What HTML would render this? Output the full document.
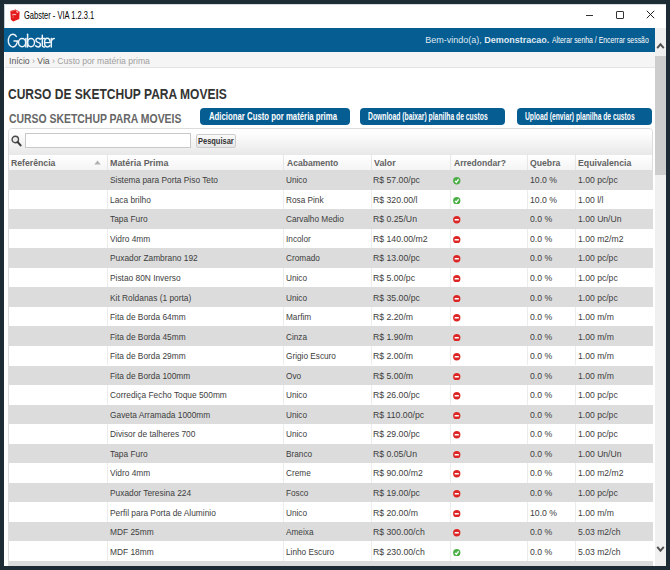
<!DOCTYPE html>
<html><head><meta charset="utf-8"><style>
html,body{margin:0;padding:0;}
body{width:670px;height:570px;overflow:hidden;background:#fff;position:relative;font-family:"Liberation Sans",sans-serif;}
.abs{position:absolute;}
.tx{position:absolute;white-space:nowrap;transform-origin:0 0;}
.btn{position:absolute;top:107.5px;height:17.5px;background:#065d92;border-radius:4px;}
</style></head><body>
<!-- title bar -->
<div class="abs" style="left:4px;top:4px;width:662px;height:24px;background:#fff;"></div>
<svg class="abs" style="left:10px;top:8.5px" width="10" height="13" viewBox="0 0 10 13"><path d="M0.3 2 L5.5 0.5 L9.6 2.8 L9.3 10 L3.2 12.5 L0.9 10.8 Z" fill="#e31b1b"/><path d="M6.3 2.4 L8.2 3.4" stroke="#fbd0d0" stroke-width="1.2"/><path d="M2.2 6.2 Q4 4.6 6.2 5.9" stroke="#f6b4b4" stroke-width="1.1" fill="none"/><path d="M2.6 8.3 L3.6 8" stroke="#f3a0a0" stroke-width="1"/><path d="M1 2.3 L5.5 1.2 L8.5 2.8" stroke="#f06a6a" stroke-width="0.8" fill="none"/></svg>
<div class="abs" style="left:586px;top:15px;width:7px;height:1px;background:#333;"></div>
<div class="abs" style="left:616px;top:11px;width:6px;height:6px;border:1px solid #333;border-radius:1px;"></div>
<svg class="abs" style="left:646px;top:10px" width="9" height="9" viewBox="0 0 9 9"><path d="M0.8 0.8 L8.2 8.2 M8.2 0.8 L0.8 8.2" stroke="#222" stroke-width="1"/></svg>
<!-- blue header -->
<div class="abs" style="left:4px;top:28px;width:651px;height:24px;background:#065d92;"></div>
<svg class="abs" style="left:4px;top:28px" width="60" height="24" viewBox="0 0 60 24"><g fill="none" stroke="#eef4fa" stroke-width="1.45" stroke-linecap="round">
<path d="M12.3 8.4 A4.6 6.3 0 1 0 13.3 14.2 L13.3 13 L10 13"/>
<ellipse cx="18.1" cy="14.6" rx="3.6" ry="4.2"/><path d="M21.9 10.4 L21.9 19"/>
<path d="M23.6 6.2 L23.6 19"/><ellipse cx="27" cy="14.6" rx="3.5" ry="4.2"/>
<path d="M36.2 11.3 Q35.3 10.3 34 10.3 Q31.9 10.3 31.9 12.3 Q31.9 13.9 34 14.4 Q36.4 14.9 36.4 16.7 Q36.4 18.9 34 18.9 Q32.5 18.9 31.6 17.8"/>
<path d="M38.3 7.2 L38.3 17.5 Q38.3 18.9 39.8 18.9 L40.6 18.9 M36.9 10.5 L40.8 10.5"/>
<path d="M40.6 14.6 L46.1 14.6 Q46.1 10.3 43.3 10.3 Q40.5 10.3 40.5 14.6 Q40.5 18.9 43.3 18.9 Q45.2 18.9 46 17.4"/>
<path d="M47.3 10.4 L47.3 19 M47.3 13.5 Q47.8 10.4 50.3 10.4"/>
</g></svg>
<!-- scrollbar -->
<div class="abs" style="left:655px;top:28px;width:11px;height:538px;background:#f0f0f0;"></div>
<div class="abs" style="left:655px;top:56px;width:11px;height:119px;background:#cdcdcd;"></div>
<svg class="abs" style="left:656px;top:42px" width="9" height="8" viewBox="0 0 9 8"><path d="M1.2 6.2 L4.5 2.3 L7.8 6.2" stroke="#505050" stroke-width="1.9" fill="none"/></svg>
<svg class="abs" style="left:656px;top:544.5px" width="9" height="8" viewBox="0 0 9 8"><path d="M1.2 1.8 L4.5 5.7 L7.8 1.8" stroke="#505050" stroke-width="1.9" fill="none"/></svg>
<!-- breadcrumb -->
<div class="abs" style="left:5px;top:52px;width:650px;height:15px;background:#f5f5f5;border-bottom:1px solid #e3e3e3;"></div>
<!-- buttons -->
<div class="btn" style="left:199.5px;width:150px;"></div>
<div class="btn" style="left:360px;width:145px;"></div>
<div class="btn" style="left:517.2px;width:134.6px;"></div>
<!-- table container -->
<div class="abs" style="left:8px;top:128px;width:643px;height:460px;border:1px solid #dcdcdc;border-radius:4px;background:#fff;"></div>
<div class="abs" style="left:9px;top:129px;width:643px;height:26px;background:linear-gradient(#fefefe 15%,#e8e8e8);border-radius:4px 4px 0 0;"></div>
<svg class="abs" style="left:11px;top:134.5px" width="11" height="12" viewBox="0 0 11 12"><circle cx="4.3" cy="4.5" r="3.2" stroke="#4a4a4a" stroke-width="1.4" fill="#ececec"/><path d="M6.6 7 L9.6 10.4" stroke="#3a3a3a" stroke-width="2" stroke-linecap="round"/></svg>
<div class="abs" style="left:25px;top:133px;width:164px;height:13px;border:1px solid #c9c9c9;background:#fff;"></div>
<div class="abs" style="left:196px;top:134px;width:38px;height:12px;border:1px solid #cdcdcd;border-radius:2px;background:linear-gradient(#fafafa,#e6e6e6);"></div>
<!-- header row -->
<div class="abs" style="left:9px;top:155px;width:643px;height:15px;background:linear-gradient(#ffffff,#f4f4f4);"></div>
<div class="abs" style="left:107px;top:155px;width:1px;height:15px;background:#e6e6e6"></div>
<div class="abs" style="left:283px;top:155px;width:1px;height:15px;background:#e6e6e6"></div>
<div class="abs" style="left:371px;top:155px;width:1px;height:15px;background:#e6e6e6"></div>
<div class="abs" style="left:450px;top:155px;width:1px;height:15px;background:#e6e6e6"></div>
<div class="abs" style="left:527px;top:155px;width:1px;height:15px;background:#e6e6e6"></div>
<div class="abs" style="left:575px;top:155px;width:1px;height:15px;background:#e6e6e6"></div>
<svg class="abs" style="left:94px;top:160px" width="7" height="5" viewBox="0 0 7 5"><path d="M0.3 4.5 L3.5 0.5 L6.7 4.5 Z" fill="#b0b0b0"/></svg>
<div class="abs" style="left:9px;top:170.00px;width:644px;height:20.05px;background:#dcdcdc"></div>
<div class="abs" style="left:9px;top:189.55px;width:644px;height:20.05px;background:#ffffff"></div>
<div class="abs" style="left:107px;top:189.55px;width:1px;height:19.55px;background:#ececec"></div>
<div class="abs" style="left:283px;top:189.55px;width:1px;height:19.55px;background:#ececec"></div>
<div class="abs" style="left:371px;top:189.55px;width:1px;height:19.55px;background:#ececec"></div>
<div class="abs" style="left:450px;top:189.55px;width:1px;height:19.55px;background:#ececec"></div>
<div class="abs" style="left:527px;top:189.55px;width:1px;height:19.55px;background:#ececec"></div>
<div class="abs" style="left:575px;top:189.55px;width:1px;height:19.55px;background:#ececec"></div>
<div class="abs" style="left:9px;top:209.10px;width:644px;height:20.05px;background:#dcdcdc"></div>
<div class="abs" style="left:9px;top:228.65px;width:644px;height:20.05px;background:#ffffff"></div>
<div class="abs" style="left:107px;top:228.65px;width:1px;height:19.55px;background:#ececec"></div>
<div class="abs" style="left:283px;top:228.65px;width:1px;height:19.55px;background:#ececec"></div>
<div class="abs" style="left:371px;top:228.65px;width:1px;height:19.55px;background:#ececec"></div>
<div class="abs" style="left:450px;top:228.65px;width:1px;height:19.55px;background:#ececec"></div>
<div class="abs" style="left:527px;top:228.65px;width:1px;height:19.55px;background:#ececec"></div>
<div class="abs" style="left:575px;top:228.65px;width:1px;height:19.55px;background:#ececec"></div>
<div class="abs" style="left:9px;top:248.20px;width:644px;height:20.05px;background:#dcdcdc"></div>
<div class="abs" style="left:9px;top:267.75px;width:644px;height:20.05px;background:#ffffff"></div>
<div class="abs" style="left:107px;top:267.75px;width:1px;height:19.55px;background:#ececec"></div>
<div class="abs" style="left:283px;top:267.75px;width:1px;height:19.55px;background:#ececec"></div>
<div class="abs" style="left:371px;top:267.75px;width:1px;height:19.55px;background:#ececec"></div>
<div class="abs" style="left:450px;top:267.75px;width:1px;height:19.55px;background:#ececec"></div>
<div class="abs" style="left:527px;top:267.75px;width:1px;height:19.55px;background:#ececec"></div>
<div class="abs" style="left:575px;top:267.75px;width:1px;height:19.55px;background:#ececec"></div>
<div class="abs" style="left:9px;top:287.30px;width:644px;height:20.05px;background:#dcdcdc"></div>
<div class="abs" style="left:9px;top:306.85px;width:644px;height:20.05px;background:#ffffff"></div>
<div class="abs" style="left:107px;top:306.85px;width:1px;height:19.55px;background:#ececec"></div>
<div class="abs" style="left:283px;top:306.85px;width:1px;height:19.55px;background:#ececec"></div>
<div class="abs" style="left:371px;top:306.85px;width:1px;height:19.55px;background:#ececec"></div>
<div class="abs" style="left:450px;top:306.85px;width:1px;height:19.55px;background:#ececec"></div>
<div class="abs" style="left:527px;top:306.85px;width:1px;height:19.55px;background:#ececec"></div>
<div class="abs" style="left:575px;top:306.85px;width:1px;height:19.55px;background:#ececec"></div>
<div class="abs" style="left:9px;top:326.40px;width:644px;height:20.05px;background:#dcdcdc"></div>
<div class="abs" style="left:9px;top:345.95px;width:644px;height:20.05px;background:#ffffff"></div>
<div class="abs" style="left:107px;top:345.95px;width:1px;height:19.55px;background:#ececec"></div>
<div class="abs" style="left:283px;top:345.95px;width:1px;height:19.55px;background:#ececec"></div>
<div class="abs" style="left:371px;top:345.95px;width:1px;height:19.55px;background:#ececec"></div>
<div class="abs" style="left:450px;top:345.95px;width:1px;height:19.55px;background:#ececec"></div>
<div class="abs" style="left:527px;top:345.95px;width:1px;height:19.55px;background:#ececec"></div>
<div class="abs" style="left:575px;top:345.95px;width:1px;height:19.55px;background:#ececec"></div>
<div class="abs" style="left:9px;top:365.50px;width:644px;height:20.05px;background:#dcdcdc"></div>
<div class="abs" style="left:9px;top:385.05px;width:644px;height:20.05px;background:#ffffff"></div>
<div class="abs" style="left:107px;top:385.05px;width:1px;height:19.55px;background:#ececec"></div>
<div class="abs" style="left:283px;top:385.05px;width:1px;height:19.55px;background:#ececec"></div>
<div class="abs" style="left:371px;top:385.05px;width:1px;height:19.55px;background:#ececec"></div>
<div class="abs" style="left:450px;top:385.05px;width:1px;height:19.55px;background:#ececec"></div>
<div class="abs" style="left:527px;top:385.05px;width:1px;height:19.55px;background:#ececec"></div>
<div class="abs" style="left:575px;top:385.05px;width:1px;height:19.55px;background:#ececec"></div>
<div class="abs" style="left:9px;top:404.60px;width:644px;height:20.05px;background:#dcdcdc"></div>
<div class="abs" style="left:9px;top:424.15px;width:644px;height:20.05px;background:#ffffff"></div>
<div class="abs" style="left:107px;top:424.15px;width:1px;height:19.55px;background:#ececec"></div>
<div class="abs" style="left:283px;top:424.15px;width:1px;height:19.55px;background:#ececec"></div>
<div class="abs" style="left:371px;top:424.15px;width:1px;height:19.55px;background:#ececec"></div>
<div class="abs" style="left:450px;top:424.15px;width:1px;height:19.55px;background:#ececec"></div>
<div class="abs" style="left:527px;top:424.15px;width:1px;height:19.55px;background:#ececec"></div>
<div class="abs" style="left:575px;top:424.15px;width:1px;height:19.55px;background:#ececec"></div>
<div class="abs" style="left:9px;top:443.70px;width:644px;height:20.05px;background:#dcdcdc"></div>
<div class="abs" style="left:9px;top:463.25px;width:644px;height:20.05px;background:#ffffff"></div>
<div class="abs" style="left:107px;top:463.25px;width:1px;height:19.55px;background:#ececec"></div>
<div class="abs" style="left:283px;top:463.25px;width:1px;height:19.55px;background:#ececec"></div>
<div class="abs" style="left:371px;top:463.25px;width:1px;height:19.55px;background:#ececec"></div>
<div class="abs" style="left:450px;top:463.25px;width:1px;height:19.55px;background:#ececec"></div>
<div class="abs" style="left:527px;top:463.25px;width:1px;height:19.55px;background:#ececec"></div>
<div class="abs" style="left:575px;top:463.25px;width:1px;height:19.55px;background:#ececec"></div>
<div class="abs" style="left:9px;top:482.80px;width:644px;height:20.05px;background:#dcdcdc"></div>
<div class="abs" style="left:9px;top:502.35px;width:644px;height:20.05px;background:#ffffff"></div>
<div class="abs" style="left:107px;top:502.35px;width:1px;height:19.55px;background:#ececec"></div>
<div class="abs" style="left:283px;top:502.35px;width:1px;height:19.55px;background:#ececec"></div>
<div class="abs" style="left:371px;top:502.35px;width:1px;height:19.55px;background:#ececec"></div>
<div class="abs" style="left:450px;top:502.35px;width:1px;height:19.55px;background:#ececec"></div>
<div class="abs" style="left:527px;top:502.35px;width:1px;height:19.55px;background:#ececec"></div>
<div class="abs" style="left:575px;top:502.35px;width:1px;height:19.55px;background:#ececec"></div>
<div class="abs" style="left:9px;top:521.90px;width:644px;height:20.05px;background:#dcdcdc"></div>
<div class="abs" style="left:9px;top:541.45px;width:644px;height:20.05px;background:#ffffff"></div>
<div class="abs" style="left:107px;top:541.45px;width:1px;height:19.55px;background:#ececec"></div>
<div class="abs" style="left:283px;top:541.45px;width:1px;height:19.55px;background:#ececec"></div>
<div class="abs" style="left:371px;top:541.45px;width:1px;height:19.55px;background:#ececec"></div>
<div class="abs" style="left:450px;top:541.45px;width:1px;height:19.55px;background:#ececec"></div>
<div class="abs" style="left:527px;top:541.45px;width:1px;height:19.55px;background:#ececec"></div>
<div class="abs" style="left:575px;top:541.45px;width:1px;height:19.55px;background:#ececec"></div>
<div class="abs" style="left:9px;top:561.00px;width:644px;height:20.05px;background:#dcdcdc"></div>
<div class="abs" style="left:453.3px;top:177.20px;line-height:0"><svg width="7.5" height="7.5" viewBox="0 0 8 8"><circle cx="4" cy="4" r="3.9" fill="#4cae46"/><path d="M2.1 4.2 L3.5 5.6 L6 2.4" stroke="#fff" stroke-width="1.3" fill="none"/></svg></div>
<div class="abs" style="left:453.3px;top:196.75px;line-height:0"><svg width="7.5" height="7.5" viewBox="0 0 8 8"><circle cx="4" cy="4" r="3.9" fill="#4cae46"/><path d="M2.1 4.2 L3.5 5.6 L6 2.4" stroke="#fff" stroke-width="1.3" fill="none"/></svg></div>
<div class="abs" style="left:453.3px;top:216.30px;line-height:0"><svg width="7.5" height="7.5" viewBox="0 0 8 8"><circle cx="4" cy="4" r="3.9" fill="#de2525"/><rect x="1.8" y="3.2" width="4.4" height="1.6" fill="#fff"/></svg></div>
<div class="abs" style="left:453.3px;top:235.85px;line-height:0"><svg width="7.5" height="7.5" viewBox="0 0 8 8"><circle cx="4" cy="4" r="3.9" fill="#de2525"/><rect x="1.8" y="3.2" width="4.4" height="1.6" fill="#fff"/></svg></div>
<div class="abs" style="left:453.3px;top:255.40px;line-height:0"><svg width="7.5" height="7.5" viewBox="0 0 8 8"><circle cx="4" cy="4" r="3.9" fill="#de2525"/><rect x="1.8" y="3.2" width="4.4" height="1.6" fill="#fff"/></svg></div>
<div class="abs" style="left:453.3px;top:274.95px;line-height:0"><svg width="7.5" height="7.5" viewBox="0 0 8 8"><circle cx="4" cy="4" r="3.9" fill="#de2525"/><rect x="1.8" y="3.2" width="4.4" height="1.6" fill="#fff"/></svg></div>
<div class="abs" style="left:453.3px;top:294.50px;line-height:0"><svg width="7.5" height="7.5" viewBox="0 0 8 8"><circle cx="4" cy="4" r="3.9" fill="#de2525"/><rect x="1.8" y="3.2" width="4.4" height="1.6" fill="#fff"/></svg></div>
<div class="abs" style="left:453.3px;top:314.05px;line-height:0"><svg width="7.5" height="7.5" viewBox="0 0 8 8"><circle cx="4" cy="4" r="3.9" fill="#de2525"/><rect x="1.8" y="3.2" width="4.4" height="1.6" fill="#fff"/></svg></div>
<div class="abs" style="left:453.3px;top:333.60px;line-height:0"><svg width="7.5" height="7.5" viewBox="0 0 8 8"><circle cx="4" cy="4" r="3.9" fill="#de2525"/><rect x="1.8" y="3.2" width="4.4" height="1.6" fill="#fff"/></svg></div>
<div class="abs" style="left:453.3px;top:353.15px;line-height:0"><svg width="7.5" height="7.5" viewBox="0 0 8 8"><circle cx="4" cy="4" r="3.9" fill="#de2525"/><rect x="1.8" y="3.2" width="4.4" height="1.6" fill="#fff"/></svg></div>
<div class="abs" style="left:453.3px;top:372.70px;line-height:0"><svg width="7.5" height="7.5" viewBox="0 0 8 8"><circle cx="4" cy="4" r="3.9" fill="#de2525"/><rect x="1.8" y="3.2" width="4.4" height="1.6" fill="#fff"/></svg></div>
<div class="abs" style="left:453.3px;top:392.25px;line-height:0"><svg width="7.5" height="7.5" viewBox="0 0 8 8"><circle cx="4" cy="4" r="3.9" fill="#de2525"/><rect x="1.8" y="3.2" width="4.4" height="1.6" fill="#fff"/></svg></div>
<div class="abs" style="left:453.3px;top:411.80px;line-height:0"><svg width="7.5" height="7.5" viewBox="0 0 8 8"><circle cx="4" cy="4" r="3.9" fill="#de2525"/><rect x="1.8" y="3.2" width="4.4" height="1.6" fill="#fff"/></svg></div>
<div class="abs" style="left:453.3px;top:431.35px;line-height:0"><svg width="7.5" height="7.5" viewBox="0 0 8 8"><circle cx="4" cy="4" r="3.9" fill="#de2525"/><rect x="1.8" y="3.2" width="4.4" height="1.6" fill="#fff"/></svg></div>
<div class="abs" style="left:453.3px;top:450.90px;line-height:0"><svg width="7.5" height="7.5" viewBox="0 0 8 8"><circle cx="4" cy="4" r="3.9" fill="#de2525"/><rect x="1.8" y="3.2" width="4.4" height="1.6" fill="#fff"/></svg></div>
<div class="abs" style="left:453.3px;top:470.45px;line-height:0"><svg width="7.5" height="7.5" viewBox="0 0 8 8"><circle cx="4" cy="4" r="3.9" fill="#de2525"/><rect x="1.8" y="3.2" width="4.4" height="1.6" fill="#fff"/></svg></div>
<div class="abs" style="left:453.3px;top:490.00px;line-height:0"><svg width="7.5" height="7.5" viewBox="0 0 8 8"><circle cx="4" cy="4" r="3.9" fill="#de2525"/><rect x="1.8" y="3.2" width="4.4" height="1.6" fill="#fff"/></svg></div>
<div class="abs" style="left:453.3px;top:509.55px;line-height:0"><svg width="7.5" height="7.5" viewBox="0 0 8 8"><circle cx="4" cy="4" r="3.9" fill="#de2525"/><rect x="1.8" y="3.2" width="4.4" height="1.6" fill="#fff"/></svg></div>
<div class="abs" style="left:453.3px;top:529.10px;line-height:0"><svg width="7.5" height="7.5" viewBox="0 0 8 8"><circle cx="4" cy="4" r="3.9" fill="#de2525"/><rect x="1.8" y="3.2" width="4.4" height="1.6" fill="#fff"/></svg></div>
<div class="abs" style="left:453.3px;top:548.65px;line-height:0"><svg width="7.5" height="7.5" viewBox="0 0 8 8"><circle cx="4" cy="4" r="3.9" fill="#4cae46"/><path d="M2.1 4.2 L3.5 5.6 L6 2.4" stroke="#fff" stroke-width="1.3" fill="none"/></svg></div>
<div class="tx" style="left:109.90px;top:174.20px;font-size:9.3px;font-weight:400;line-height:12px;color:#3d3d3d;transform:scaleX(0.8980);">Sistema para Porta Piso Teto</div>
<div class="tx" style="left:285.90px;top:174.20px;font-size:9.3px;font-weight:400;line-height:12px;color:#3d3d3d;transform:scaleX(0.8870);">Unico</div>
<div class="tx" style="left:372.80px;top:174.20px;font-size:9.3px;font-weight:400;line-height:12px;color:#3d3d3d;transform:scaleX(0.9350);">R$ 57.00/pc</div>
<div class="tx" style="left:530.00px;top:174.20px;font-size:9.3px;font-weight:400;line-height:12px;color:#3d3d3d;transform:scaleX(0.9350);">10.0 %</div>
<div class="tx" style="left:578.30px;top:174.20px;font-size:9.3px;font-weight:400;line-height:12px;color:#3d3d3d;transform:scaleX(0.9250);">1.00 pc/pc</div>
<div class="tx" style="left:109.90px;top:193.75px;font-size:9.3px;font-weight:400;line-height:12px;color:#3d3d3d;transform:scaleX(0.8980);">Laca brilho</div>
<div class="tx" style="left:285.90px;top:193.75px;font-size:9.3px;font-weight:400;line-height:12px;color:#3d3d3d;transform:scaleX(0.8870);">Rosa Pink</div>
<div class="tx" style="left:372.80px;top:193.75px;font-size:9.3px;font-weight:400;line-height:12px;color:#3d3d3d;transform:scaleX(0.9350);">R$ 320.00/l</div>
<div class="tx" style="left:530.00px;top:193.75px;font-size:9.3px;font-weight:400;line-height:12px;color:#3d3d3d;transform:scaleX(0.9350);">10.0 %</div>
<div class="tx" style="left:578.30px;top:193.75px;font-size:9.3px;font-weight:400;line-height:12px;color:#3d3d3d;transform:scaleX(0.9250);">1.00 l/l</div>
<div class="tx" style="left:109.90px;top:213.30px;font-size:9.3px;font-weight:400;line-height:12px;color:#3d3d3d;transform:scaleX(0.8980);">Tapa Furo</div>
<div class="tx" style="left:285.90px;top:213.30px;font-size:9.3px;font-weight:400;line-height:12px;color:#3d3d3d;transform:scaleX(0.8870);">Carvalho Medio</div>
<div class="tx" style="left:372.80px;top:213.30px;font-size:9.3px;font-weight:400;line-height:12px;color:#3d3d3d;transform:scaleX(0.9350);">R$ 0.25/Un</div>
<div class="tx" style="left:530.00px;top:213.30px;font-size:9.3px;font-weight:400;line-height:12px;color:#3d3d3d;transform:scaleX(0.9350);">0.0 %</div>
<div class="tx" style="left:578.30px;top:213.30px;font-size:9.3px;font-weight:400;line-height:12px;color:#3d3d3d;transform:scaleX(0.9250);">1.00 Un/Un</div>
<div class="tx" style="left:109.90px;top:232.85px;font-size:9.3px;font-weight:400;line-height:12px;color:#3d3d3d;transform:scaleX(0.8980);">Vidro 4mm</div>
<div class="tx" style="left:285.90px;top:232.85px;font-size:9.3px;font-weight:400;line-height:12px;color:#3d3d3d;transform:scaleX(0.8870);">Incolor</div>
<div class="tx" style="left:372.80px;top:232.85px;font-size:9.3px;font-weight:400;line-height:12px;color:#3d3d3d;transform:scaleX(0.9350);">R$ 140.00/m2</div>
<div class="tx" style="left:530.00px;top:232.85px;font-size:9.3px;font-weight:400;line-height:12px;color:#3d3d3d;transform:scaleX(0.9350);">0.0 %</div>
<div class="tx" style="left:578.30px;top:232.85px;font-size:9.3px;font-weight:400;line-height:12px;color:#3d3d3d;transform:scaleX(0.9250);">1.00 m2/m2</div>
<div class="tx" style="left:109.90px;top:252.40px;font-size:9.3px;font-weight:400;line-height:12px;color:#3d3d3d;transform:scaleX(0.8980);">Puxador Zambrano 192</div>
<div class="tx" style="left:285.90px;top:252.40px;font-size:9.3px;font-weight:400;line-height:12px;color:#3d3d3d;transform:scaleX(0.8870);">Cromado</div>
<div class="tx" style="left:372.80px;top:252.40px;font-size:9.3px;font-weight:400;line-height:12px;color:#3d3d3d;transform:scaleX(0.9350);">R$ 13.00/pc</div>
<div class="tx" style="left:530.00px;top:252.40px;font-size:9.3px;font-weight:400;line-height:12px;color:#3d3d3d;transform:scaleX(0.9350);">0.0 %</div>
<div class="tx" style="left:578.30px;top:252.40px;font-size:9.3px;font-weight:400;line-height:12px;color:#3d3d3d;transform:scaleX(0.9250);">1.00 pc/pc</div>
<div class="tx" style="left:109.90px;top:271.95px;font-size:9.3px;font-weight:400;line-height:12px;color:#3d3d3d;transform:scaleX(0.8980);">Pistao 80N Inverso</div>
<div class="tx" style="left:285.90px;top:271.95px;font-size:9.3px;font-weight:400;line-height:12px;color:#3d3d3d;transform:scaleX(0.8870);">Unico</div>
<div class="tx" style="left:372.80px;top:271.95px;font-size:9.3px;font-weight:400;line-height:12px;color:#3d3d3d;transform:scaleX(0.9350);">R$ 5.00/pc</div>
<div class="tx" style="left:530.00px;top:271.95px;font-size:9.3px;font-weight:400;line-height:12px;color:#3d3d3d;transform:scaleX(0.9350);">0.0 %</div>
<div class="tx" style="left:578.30px;top:271.95px;font-size:9.3px;font-weight:400;line-height:12px;color:#3d3d3d;transform:scaleX(0.9250);">1.00 pc/pc</div>
<div class="tx" style="left:109.90px;top:291.50px;font-size:9.3px;font-weight:400;line-height:12px;color:#3d3d3d;transform:scaleX(0.8980);">Kit Roldanas (1 porta)</div>
<div class="tx" style="left:285.90px;top:291.50px;font-size:9.3px;font-weight:400;line-height:12px;color:#3d3d3d;transform:scaleX(0.8870);">Unico</div>
<div class="tx" style="left:372.80px;top:291.50px;font-size:9.3px;font-weight:400;line-height:12px;color:#3d3d3d;transform:scaleX(0.9350);">R$ 35.00/pc</div>
<div class="tx" style="left:530.00px;top:291.50px;font-size:9.3px;font-weight:400;line-height:12px;color:#3d3d3d;transform:scaleX(0.9350);">0.0 %</div>
<div class="tx" style="left:578.30px;top:291.50px;font-size:9.3px;font-weight:400;line-height:12px;color:#3d3d3d;transform:scaleX(0.9250);">1.00 pc/pc</div>
<div class="tx" style="left:109.90px;top:311.05px;font-size:9.3px;font-weight:400;line-height:12px;color:#3d3d3d;transform:scaleX(0.8980);">Fita de Borda 64mm</div>
<div class="tx" style="left:285.90px;top:311.05px;font-size:9.3px;font-weight:400;line-height:12px;color:#3d3d3d;transform:scaleX(0.8870);">Marfim</div>
<div class="tx" style="left:372.80px;top:311.05px;font-size:9.3px;font-weight:400;line-height:12px;color:#3d3d3d;transform:scaleX(0.9350);">R$ 2.20/m</div>
<div class="tx" style="left:530.00px;top:311.05px;font-size:9.3px;font-weight:400;line-height:12px;color:#3d3d3d;transform:scaleX(0.9350);">0.0 %</div>
<div class="tx" style="left:578.30px;top:311.05px;font-size:9.3px;font-weight:400;line-height:12px;color:#3d3d3d;transform:scaleX(0.9250);">1.00 m/m</div>
<div class="tx" style="left:109.90px;top:330.60px;font-size:9.3px;font-weight:400;line-height:12px;color:#3d3d3d;transform:scaleX(0.8980);">Fita de Borda 45mm</div>
<div class="tx" style="left:285.90px;top:330.60px;font-size:9.3px;font-weight:400;line-height:12px;color:#3d3d3d;transform:scaleX(0.8870);">Cinza</div>
<div class="tx" style="left:372.80px;top:330.60px;font-size:9.3px;font-weight:400;line-height:12px;color:#3d3d3d;transform:scaleX(0.9350);">R$ 1.90/m</div>
<div class="tx" style="left:530.00px;top:330.60px;font-size:9.3px;font-weight:400;line-height:12px;color:#3d3d3d;transform:scaleX(0.9350);">0.0 %</div>
<div class="tx" style="left:578.30px;top:330.60px;font-size:9.3px;font-weight:400;line-height:12px;color:#3d3d3d;transform:scaleX(0.9250);">1.00 m/m</div>
<div class="tx" style="left:109.90px;top:350.15px;font-size:9.3px;font-weight:400;line-height:12px;color:#3d3d3d;transform:scaleX(0.8980);">Fita de Borda 29mm</div>
<div class="tx" style="left:285.90px;top:350.15px;font-size:9.3px;font-weight:400;line-height:12px;color:#3d3d3d;transform:scaleX(0.8870);">Grigio Escuro</div>
<div class="tx" style="left:372.80px;top:350.15px;font-size:9.3px;font-weight:400;line-height:12px;color:#3d3d3d;transform:scaleX(0.9350);">R$ 2.00/m</div>
<div class="tx" style="left:530.00px;top:350.15px;font-size:9.3px;font-weight:400;line-height:12px;color:#3d3d3d;transform:scaleX(0.9350);">0.0 %</div>
<div class="tx" style="left:578.30px;top:350.15px;font-size:9.3px;font-weight:400;line-height:12px;color:#3d3d3d;transform:scaleX(0.9250);">1.00 m/m</div>
<div class="tx" style="left:109.90px;top:369.70px;font-size:9.3px;font-weight:400;line-height:12px;color:#3d3d3d;transform:scaleX(0.8980);">Fita de Borda 100mm</div>
<div class="tx" style="left:285.90px;top:369.70px;font-size:9.3px;font-weight:400;line-height:12px;color:#3d3d3d;transform:scaleX(0.8870);">Ovo</div>
<div class="tx" style="left:372.80px;top:369.70px;font-size:9.3px;font-weight:400;line-height:12px;color:#3d3d3d;transform:scaleX(0.9350);">R$ 5.00/m</div>
<div class="tx" style="left:530.00px;top:369.70px;font-size:9.3px;font-weight:400;line-height:12px;color:#3d3d3d;transform:scaleX(0.9350);">0.0 %</div>
<div class="tx" style="left:578.30px;top:369.70px;font-size:9.3px;font-weight:400;line-height:12px;color:#3d3d3d;transform:scaleX(0.9250);">1.00 m/m</div>
<div class="tx" style="left:109.90px;top:389.25px;font-size:9.3px;font-weight:400;line-height:12px;color:#3d3d3d;transform:scaleX(0.8980);">Corrediça Fecho Toque 500mm</div>
<div class="tx" style="left:285.90px;top:389.25px;font-size:9.3px;font-weight:400;line-height:12px;color:#3d3d3d;transform:scaleX(0.8870);">Unico</div>
<div class="tx" style="left:372.80px;top:389.25px;font-size:9.3px;font-weight:400;line-height:12px;color:#3d3d3d;transform:scaleX(0.9350);">R$ 26.00/pc</div>
<div class="tx" style="left:530.00px;top:389.25px;font-size:9.3px;font-weight:400;line-height:12px;color:#3d3d3d;transform:scaleX(0.9350);">0.0 %</div>
<div class="tx" style="left:578.30px;top:389.25px;font-size:9.3px;font-weight:400;line-height:12px;color:#3d3d3d;transform:scaleX(0.9250);">1.00 pc/pc</div>
<div class="tx" style="left:109.90px;top:408.80px;font-size:9.3px;font-weight:400;line-height:12px;color:#3d3d3d;transform:scaleX(0.8980);">Gaveta Arramada 1000mm</div>
<div class="tx" style="left:285.90px;top:408.80px;font-size:9.3px;font-weight:400;line-height:12px;color:#3d3d3d;transform:scaleX(0.8870);">Unico</div>
<div class="tx" style="left:372.80px;top:408.80px;font-size:9.3px;font-weight:400;line-height:12px;color:#3d3d3d;transform:scaleX(0.9350);">R$ 110.00/pc</div>
<div class="tx" style="left:530.00px;top:408.80px;font-size:9.3px;font-weight:400;line-height:12px;color:#3d3d3d;transform:scaleX(0.9350);">0.0 %</div>
<div class="tx" style="left:578.30px;top:408.80px;font-size:9.3px;font-weight:400;line-height:12px;color:#3d3d3d;transform:scaleX(0.9250);">1.00 pc/pc</div>
<div class="tx" style="left:109.90px;top:428.35px;font-size:9.3px;font-weight:400;line-height:12px;color:#3d3d3d;transform:scaleX(0.8980);">Divisor de talheres 700</div>
<div class="tx" style="left:285.90px;top:428.35px;font-size:9.3px;font-weight:400;line-height:12px;color:#3d3d3d;transform:scaleX(0.8870);">Unico</div>
<div class="tx" style="left:372.80px;top:428.35px;font-size:9.3px;font-weight:400;line-height:12px;color:#3d3d3d;transform:scaleX(0.9350);">R$ 29.00/pc</div>
<div class="tx" style="left:530.00px;top:428.35px;font-size:9.3px;font-weight:400;line-height:12px;color:#3d3d3d;transform:scaleX(0.9350);">0.0 %</div>
<div class="tx" style="left:578.30px;top:428.35px;font-size:9.3px;font-weight:400;line-height:12px;color:#3d3d3d;transform:scaleX(0.9250);">1.00 pc/pc</div>
<div class="tx" style="left:109.90px;top:447.90px;font-size:9.3px;font-weight:400;line-height:12px;color:#3d3d3d;transform:scaleX(0.8980);">Tapa Furo</div>
<div class="tx" style="left:285.90px;top:447.90px;font-size:9.3px;font-weight:400;line-height:12px;color:#3d3d3d;transform:scaleX(0.8870);">Branco</div>
<div class="tx" style="left:372.80px;top:447.90px;font-size:9.3px;font-weight:400;line-height:12px;color:#3d3d3d;transform:scaleX(0.9350);">R$ 0.05/Un</div>
<div class="tx" style="left:530.00px;top:447.90px;font-size:9.3px;font-weight:400;line-height:12px;color:#3d3d3d;transform:scaleX(0.9350);">0.0 %</div>
<div class="tx" style="left:578.30px;top:447.90px;font-size:9.3px;font-weight:400;line-height:12px;color:#3d3d3d;transform:scaleX(0.9250);">1.00 Un/Un</div>
<div class="tx" style="left:109.90px;top:467.45px;font-size:9.3px;font-weight:400;line-height:12px;color:#3d3d3d;transform:scaleX(0.8980);">Vidro 4mm</div>
<div class="tx" style="left:285.90px;top:467.45px;font-size:9.3px;font-weight:400;line-height:12px;color:#3d3d3d;transform:scaleX(0.8870);">Creme</div>
<div class="tx" style="left:372.80px;top:467.45px;font-size:9.3px;font-weight:400;line-height:12px;color:#3d3d3d;transform:scaleX(0.9350);">R$ 90.00/m2</div>
<div class="tx" style="left:530.00px;top:467.45px;font-size:9.3px;font-weight:400;line-height:12px;color:#3d3d3d;transform:scaleX(0.9350);">0.0 %</div>
<div class="tx" style="left:578.30px;top:467.45px;font-size:9.3px;font-weight:400;line-height:12px;color:#3d3d3d;transform:scaleX(0.9250);">1.00 m2/m2</div>
<div class="tx" style="left:109.90px;top:487.00px;font-size:9.3px;font-weight:400;line-height:12px;color:#3d3d3d;transform:scaleX(0.8980);">Puxador Teresina 224</div>
<div class="tx" style="left:285.90px;top:487.00px;font-size:9.3px;font-weight:400;line-height:12px;color:#3d3d3d;transform:scaleX(0.8870);">Fosco</div>
<div class="tx" style="left:372.80px;top:487.00px;font-size:9.3px;font-weight:400;line-height:12px;color:#3d3d3d;transform:scaleX(0.9350);">R$ 19.00/pc</div>
<div class="tx" style="left:530.00px;top:487.00px;font-size:9.3px;font-weight:400;line-height:12px;color:#3d3d3d;transform:scaleX(0.9350);">0.0 %</div>
<div class="tx" style="left:578.30px;top:487.00px;font-size:9.3px;font-weight:400;line-height:12px;color:#3d3d3d;transform:scaleX(0.9250);">1.00 pc/pc</div>
<div class="tx" style="left:109.90px;top:506.55px;font-size:9.3px;font-weight:400;line-height:12px;color:#3d3d3d;transform:scaleX(0.8980);">Perfil para Porta de Aluminio</div>
<div class="tx" style="left:285.90px;top:506.55px;font-size:9.3px;font-weight:400;line-height:12px;color:#3d3d3d;transform:scaleX(0.8870);">Unico</div>
<div class="tx" style="left:372.80px;top:506.55px;font-size:9.3px;font-weight:400;line-height:12px;color:#3d3d3d;transform:scaleX(0.9350);">R$ 20.00/m</div>
<div class="tx" style="left:530.00px;top:506.55px;font-size:9.3px;font-weight:400;line-height:12px;color:#3d3d3d;transform:scaleX(0.9350);">10.0 %</div>
<div class="tx" style="left:578.30px;top:506.55px;font-size:9.3px;font-weight:400;line-height:12px;color:#3d3d3d;transform:scaleX(0.9250);">1.00 m/m</div>
<div class="tx" style="left:109.90px;top:526.10px;font-size:9.3px;font-weight:400;line-height:12px;color:#3d3d3d;transform:scaleX(0.8980);">MDF 25mm</div>
<div class="tx" style="left:285.90px;top:526.10px;font-size:9.3px;font-weight:400;line-height:12px;color:#3d3d3d;transform:scaleX(0.8870);">Ameixa</div>
<div class="tx" style="left:372.80px;top:526.10px;font-size:9.3px;font-weight:400;line-height:12px;color:#3d3d3d;transform:scaleX(0.9350);">R$ 300.00/ch</div>
<div class="tx" style="left:530.00px;top:526.10px;font-size:9.3px;font-weight:400;line-height:12px;color:#3d3d3d;transform:scaleX(0.9350);">0.0 %</div>
<div class="tx" style="left:578.30px;top:526.10px;font-size:9.3px;font-weight:400;line-height:12px;color:#3d3d3d;transform:scaleX(0.9250);">5.03 m2/ch</div>
<div class="tx" style="left:109.90px;top:545.65px;font-size:9.3px;font-weight:400;line-height:12px;color:#3d3d3d;transform:scaleX(0.8980);">MDF 18mm</div>
<div class="tx" style="left:285.90px;top:545.65px;font-size:9.3px;font-weight:400;line-height:12px;color:#3d3d3d;transform:scaleX(0.8870);">Linho Escuro</div>
<div class="tx" style="left:372.80px;top:545.65px;font-size:9.3px;font-weight:400;line-height:12px;color:#3d3d3d;transform:scaleX(0.9350);">R$ 230.00/ch</div>
<div class="tx" style="left:530.00px;top:545.65px;font-size:9.3px;font-weight:400;line-height:12px;color:#3d3d3d;transform:scaleX(0.9350);">0.0 %</div>
<div class="tx" style="left:578.30px;top:545.65px;font-size:9.3px;font-weight:400;line-height:12px;color:#3d3d3d;transform:scaleX(0.9250);">5.03 m2/ch</div>
<div class="tx" style="left:24.10px;top:9.20px;font-size:11px;font-weight:400;line-height:13px;color:#000;transform:scaleX(0.6843);">Gabster - VIA 1.2.3.1</div>
<div class="tx" style="left:425.30px;top:35.00px;font-size:9px;font-weight:400;line-height:11px;color:#dfe9f2;transform:scaleX(1.0000);">Bem-vindo(a), <b>Demonstracao.</b></div>
<div class="tx" style="left:552.00px;top:35.00px;font-size:9px;font-weight:400;line-height:11px;color:#fff;transform:scaleX(0.7643);">Alterar senha / Encerrar sessão</div>
<div class="tx" style="left:8.74px;top:55.80px;font-size:9px;font-weight:400;line-height:11px;color:#a0a0a0;transform:scaleX(0.9589);"><span style='color:#555'>Início</span> › <span style='color:#555'>Via</span> › Custo por matéria prima</div>
<div class="tx" style="left:7.74px;top:86.40px;font-size:14px;font-weight:700;line-height:16px;color:#333;transform:scaleX(0.8585);">CURSO DE SKETCHUP PARA MOVEIS</div>
<div class="tx" style="left:8.60px;top:112.20px;font-size:12px;font-weight:700;line-height:14px;color:#666;transform:scaleX(0.8687);">CURSO SKETCHUP PARA MOVEIS</div>
<div class="tx" style="left:209.00px;top:110.40px;font-size:10.5px;font-weight:700;line-height:12px;color:#fff;transform:scaleX(0.7410);">Adicionar Custo por matéria prima</div>
<div class="tx" style="left:367.65px;top:110.40px;font-size:10.5px;font-weight:700;line-height:12px;color:#fff;transform:scaleX(0.6451);">Download (baixar) planilha de custos</div>
<div class="tx" style="left:524.76px;top:110.40px;font-size:10.5px;font-weight:700;line-height:12px;color:#fff;transform:scaleX(0.6418);">Upload (enviar) planilha de custos</div>
<div class="tx" style="left:197.81px;top:134.80px;font-size:9.5px;font-weight:700;line-height:11px;color:#333;transform:scaleX(0.7867);">Pesquisar</div>
<div class="tx" style="left:10.89px;top:156.80px;font-size:9.5px;font-weight:700;line-height:11px;color:#626262;transform:scaleX(0.9146);">Referência</div>
<div class="tx" style="left:109.86px;top:156.80px;font-size:9.5px;font-weight:700;line-height:11px;color:#626262;transform:scaleX(0.9377);">Matéria Prima</div>
<div class="tx" style="left:286.70px;top:156.80px;font-size:9.5px;font-weight:700;line-height:11px;color:#626262;transform:scaleX(0.9000);">Acabamento</div>
<div class="tx" style="left:374.00px;top:156.80px;font-size:9.5px;font-weight:700;line-height:11px;color:#626262;transform:scaleX(0.9304);">Valor</div>
<div class="tx" style="left:453.80px;top:156.80px;font-size:9.5px;font-weight:700;line-height:11px;color:#626262;transform:scaleX(0.9018);">Arredondar?</div>
<div class="tx" style="left:530.30px;top:156.80px;font-size:9.5px;font-weight:700;line-height:11px;color:#626262;transform:scaleX(0.9121);">Quebra</div>
<div class="tx" style="left:578.28px;top:156.80px;font-size:9.5px;font-weight:700;line-height:11px;color:#626262;transform:scaleX(0.9175);">Equivalencia</div>
<!-- window frame -->
<div class="abs" style="left:4px;top:4px;width:1px;height:24px;background:#c3ced6;"></div><div class="abs" style="left:4px;top:4px;width:662px;height:1px;background:#d5dbe0;"></div>
<div class="abs" style="left:0;top:0;width:670px;height:4px;background:#1d2b34;"></div>
<div class="abs" style="left:0;top:566px;width:670px;height:4px;background:#1d2b34;"></div>
<div class="abs" style="left:0;top:0;width:4px;height:570px;background:#1d2b34;"></div>
<div class="abs" style="left:666px;top:0;width:4px;height:570px;background:#1d2b34;"></div>
</body></html>
